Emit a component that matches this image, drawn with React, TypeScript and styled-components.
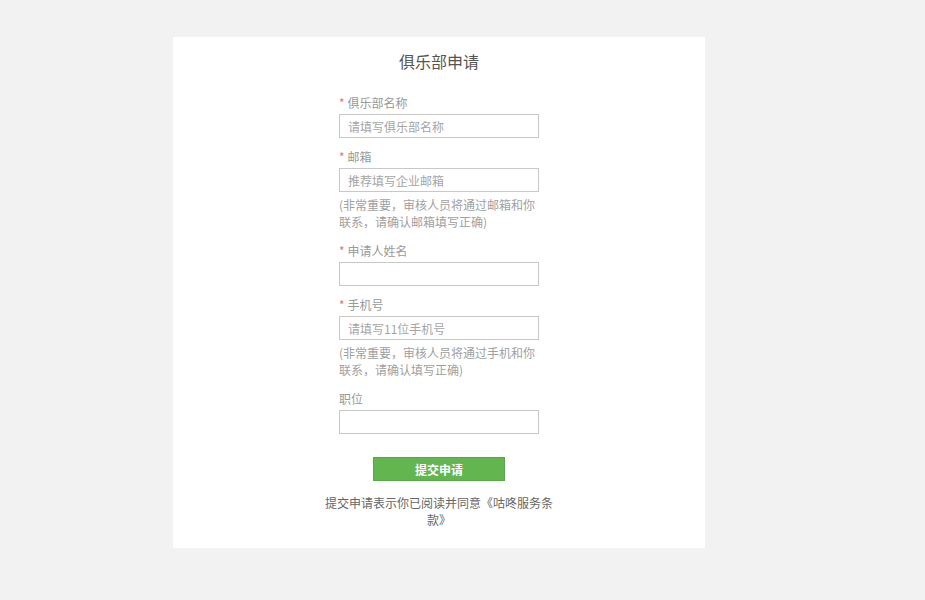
import styled, { createGlobalStyle } from 'styled-components'

const GlobalStyle = createGlobalStyle`
  html, body {
    margin: 0;
    padding: 0;
    background-color: #f2f2f2;
    font-family: "Noto Sans CJK SC", "Liberation Sans", sans-serif;
  }
`

type Field = {
  label: string
  required?: boolean
  placeholder?: string
  hint?: string
}

const fields: Field[] = [
  { label: '俱乐部名称', required: true, placeholder: '请填写俱乐部名称' },
  {
    label: '邮箱',
    required: true,
    placeholder: '推荐填写企业邮箱',
    hint: '(非常重要，审核人员将通过邮箱和你联系，请确认邮箱填写正确)',
  },
  { label: '申请人姓名', required: true },
  {
    label: '手机号',
    required: true,
    placeholder: '请填写11位手机号',
    hint: '(非常重要，审核人员将通过手机和你联系，请确认填写正确)',
  },
  { label: '职位' },
]

export default function App() {
  return (
    <Page>
      <GlobalStyle />
      <Card>
        <Title>俱乐部申请</Title>
        <Form>
          {fields.map((f) => (
            <FieldBlock key={f.label} $hasHint={!!f.hint}>
              <Label>
                {f.required && <Star>*</Star>}
                {f.label}
              </Label>
              <Input type="text" placeholder={f.placeholder} />
              {f.hint && <Hint>{f.hint}</Hint>}
            </FieldBlock>
          ))}
        </Form>
        <SubmitButton type="button">提交申请</SubmitButton>
        <Terms>提交申请表示你已阅读并同意《咕咚服务条款》</Terms>
      </Card>
    </Page>
  )
}

const Page = styled.div`
  padding: 37px 0 52px 173px;
`

const Card = styled.div`
  width: 532px;
  background-color: #fff;
  box-sizing: border-box;
  padding: 12px 0 20px;
  display: flex;
  flex-direction: column;
  align-items: center;
`

const Title = styled.h1`
  margin: 0;
  font-size: 16px;
  line-height: 24px;
  font-weight: normal;
  color: #555;
`

const Form = styled.div`
  width: 200px;
  margin-top: 21px;
  display: flex;
  flex-direction: column;
`

const FieldBlock = styled.div<{ $hasHint: boolean }>`
  display: flex;
  flex-direction: column;
  margin-bottom: ${(p) => (p.$hasHint ? 12 : 10)}px;

  &:last-child {
    margin-bottom: 0;
  }
`

const Label = styled.label`
  font-size: 12px;
  line-height: 18px;
  color: #999;
  margin-bottom: 2px;
`

const Star = styled.span`
  color: #f56c6c;
  margin-right: 3px;
`

const Input = styled.input`
  box-sizing: border-box;
  width: 200px;
  height: 24px;
  border: 1px solid #c8c8c8;
  padding: 0 8px;
  font-family: inherit;
  font-size: 12px;
  color: #555;
  outline: none;

  &::placeholder {
    color: #a5a5a5;
  }
`

const Hint = styled.p`
  margin: 5px 0 0;
  font-size: 12px;
  line-height: 16.5px;
  color: #a0a0a0;
`

const SubmitButton = styled.button`
  margin-top: 23px;
  width: 132px;
  height: 24px;
  background-color: #63b54f;
  border: 1px solid #56a842;
  color: #fff;
  font-family: inherit;
  font-size: 12px;
  font-weight: bold;
  padding: 0;
  cursor: pointer;
`

const Terms = styled.p`
  margin: 13px 0 0;
  width: 232px;
  text-align: center;
  font-size: 12px;
  line-height: 17px;
  color: #666;
`
